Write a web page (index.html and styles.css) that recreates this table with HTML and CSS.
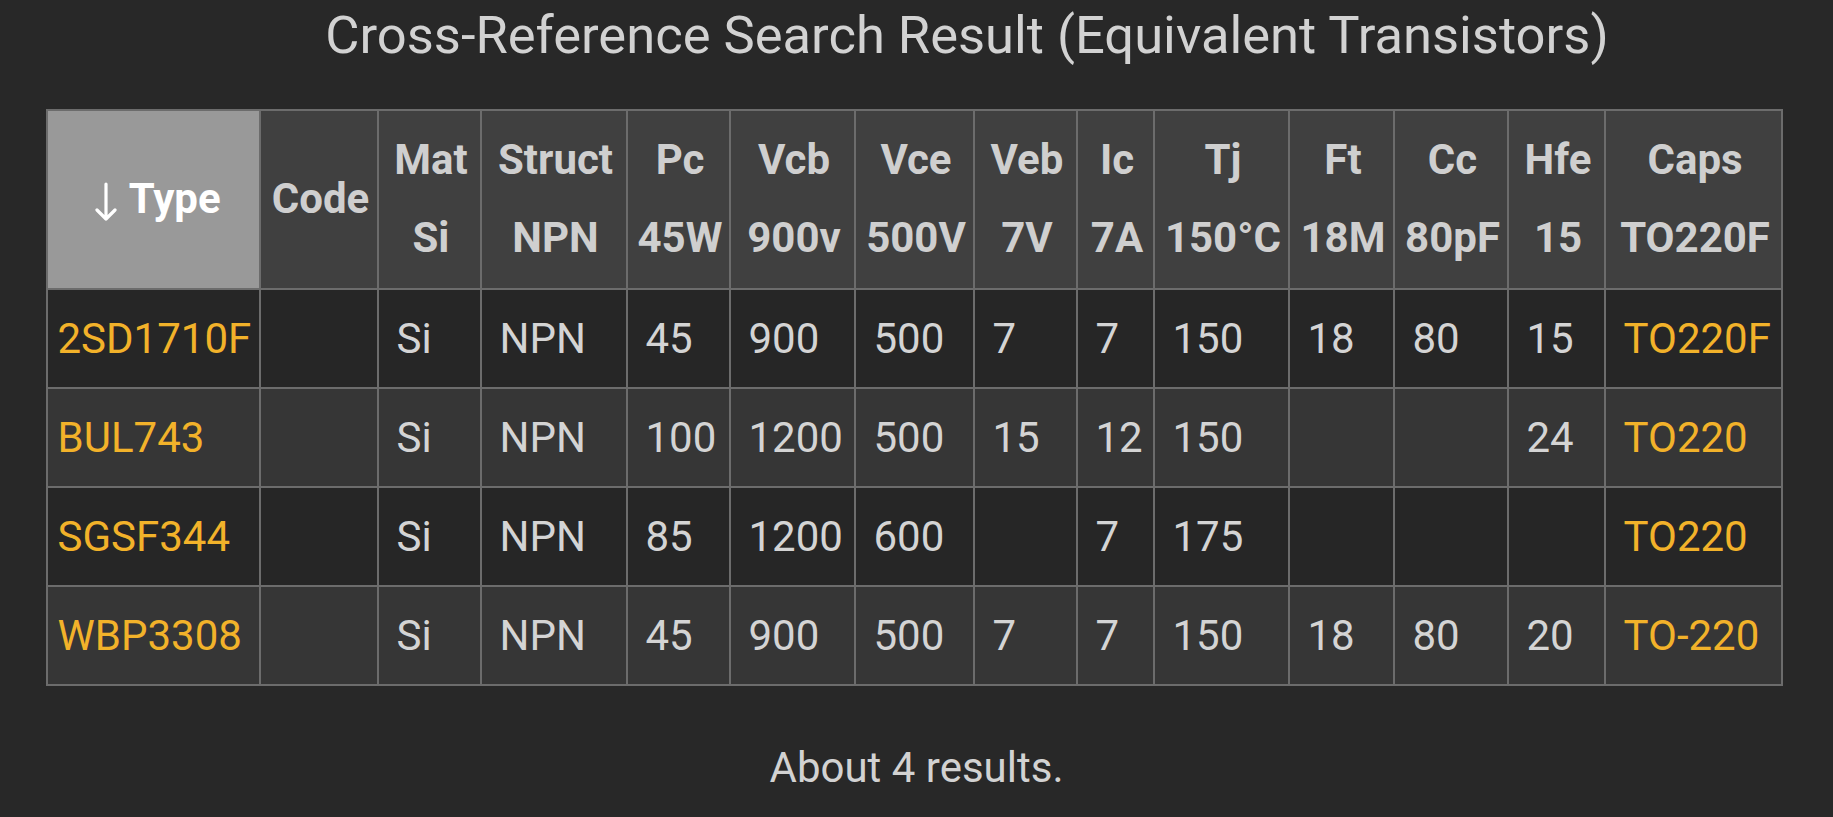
FILE: index.html
```html
<!DOCTYPE html>
<html lang="en">
<head>
<meta charset="utf-8">
<title>Cross-Reference Search Result</title>
<link rel="stylesheet" href="styles.css">
</head>
<body>
<div class="page">
  <h1 class="title">Cross-Reference Search Result (Equivalent Transistors)</h1>
  <table class="xref">
    <colgroup>
      <col class="c-type"><col class="c-code"><col class="c-mat"><col class="c-struct"><col class="c-pc"><col class="c-vcb"><col class="c-vce"><col class="c-veb"><col class="c-ic"><col class="c-tj"><col class="c-ft"><col class="c-cc"><col class="c-hfe"><col class="c-caps">
    </colgroup>
    <thead>
      <tr>
        <th class="sorted"><svg class="arrow" width="22" height="40" viewBox="0 0 22 40" aria-hidden="true"><path d="M11 2 V37 M2 28 L11 37 L20 28" fill="none" stroke="#ffffff" stroke-width="3.2" stroke-linecap="round" stroke-linejoin="round"/></svg> Type</th>
        <th>Code</th>
        <th>Mat<br>Si</th>
        <th>Struct<br>NPN</th>
        <th>Pc<br>45W</th>
        <th>Vcb<br>900v</th>
        <th>Vce<br>500V</th>
        <th>Veb<br>7V</th>
        <th>Ic<br>7A</th>
        <th>Tj<br>150°C</th>
        <th>Ft<br>18M</th>
        <th>Cc<br>80pF</th>
        <th>Hfe<br>15</th>
        <th>Caps<br>TO220F</th>
      </tr>
    </thead>
    <tbody>
      <tr>
        <td class="part">2SD1710F</td><td class="narrow"></td><td>Si</td><td>NPN</td><td>45</td><td>900</td><td>500</td><td>7</td><td>7</td><td>150</td><td>18</td><td>80</td><td>15</td><td class="pkg">TO220F</td>
      </tr>
      <tr>
        <td class="part">BUL743</td><td class="narrow"></td><td>Si</td><td>NPN</td><td>100</td><td>1200</td><td>500</td><td>15</td><td>12</td><td>150</td><td></td><td></td><td>24</td><td class="pkg">TO220</td>
      </tr>
      <tr>
        <td class="part">SGSF344</td><td class="narrow"></td><td>Si</td><td>NPN</td><td>85</td><td>1200</td><td>600</td><td></td><td>7</td><td>175</td><td></td><td></td><td></td><td class="pkg">TO220</td>
      </tr>
      <tr>
        <td class="part">WBP3308</td><td class="narrow"></td><td>Si</td><td>NPN</td><td>45</td><td>900</td><td>500</td><td>7</td><td>7</td><td>150</td><td>18</td><td>80</td><td>20</td><td class="pkg">TO-220</td>
      </tr>
    </tbody>
  </table>
  <p class="count">About 4 results.</p>
</div>
</body>
</html>
```

FILE: styles.css
```css
html, body {
  margin: 0;
  padding: 0;
  background: #282828;
}
body {
  font-family: Roboto, "Liberation Sans", sans-serif;
  color: #d2d2d2;
}
.page {
  display: flex;
  flex-direction: column;
  align-items: center;
  padding-top: 5px;
}
.title {
  margin: 0;
  font-size: 52.5px;
  font-weight: 400;
  line-height: 60px;
  color: #d2d2d2;
  padding-left: 101px;
  white-space: nowrap;
}
.xref {
  margin-top: 44px;
  margin-left: -5px;
  border-collapse: collapse;
  table-layout: fixed;
  width: 1737px;
  border: 2px solid #6c6c6c;
  font-size: 42px;
}
.c-type { width: 213px; }
.c-code { width: 118px; }
.c-mat { width: 103px; }
.c-struct { width: 146px; }
.c-pc { width: 103px; }
.c-vcb { width: 125px; }
.c-vce { width: 119px; }
.c-veb { width: 103px; }
.c-ic { width: 77px; }
.c-tj { width: 135px; }
.c-ft { width: 105px; }
.c-cc { width: 114px; }
.c-hfe { width: 97px; }
.c-caps { width: 177px; }

.xref th, .xref td {
  border: 2px solid #6c6c6c;
  white-space: nowrap;
  overflow: hidden;
}
.xref th {
  background: #404040;
  color: #cfcfcf;
  font-weight: 700;
  text-align: center;
  line-height: 78px;
  padding: 10px 2px 11px 6px;
}
.xref th.sorted {
  background: #999999;
  color: #ffffff;
  padding-left: 12px;
}
.arrow {
  display: inline-block;
  vertical-align: -9px;
  margin-right: 2px;
}
.xref td {
  line-height: 77px;
  text-align: left;
  font-weight: 400;
  color: #d4d4d4;
  padding: 10px 6px 10px 18px;
}
.xref tbody tr:nth-child(odd) td { background: #262626; }
.xref tbody tr:nth-child(even) td { background: #363636; }
.xref td.part {
  padding-left: 10px;
  color: #f2b22a;
}
.xref td.narrow {
  padding-left: 10px;
}
.xref td.pkg {
  color: #f2b22a;
}
.count {
  margin: 57px 0 0;
  font-size: 42px;
  line-height: 49px;
  color: #d2d2d2;
}
```
